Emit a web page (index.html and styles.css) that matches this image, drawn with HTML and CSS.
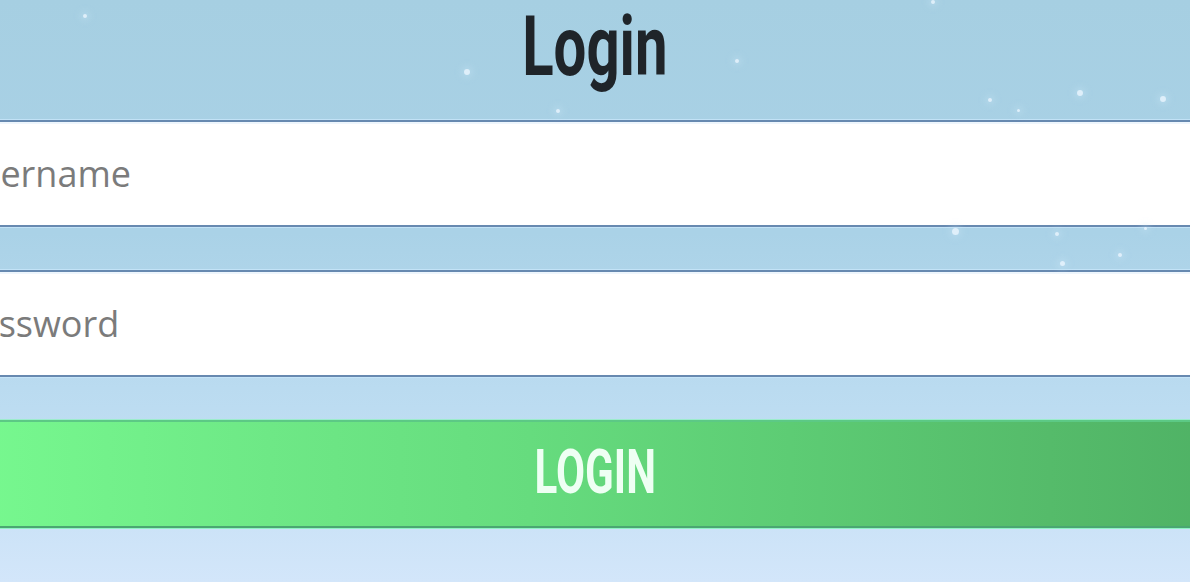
FILE: index.html
```html
<!DOCTYPE html>
<html lang="en">
<head>
    <meta charset="UTF-8">
    <meta name="viewport" content="width=device-width, initial-scale=1.0">
    <title>Login</title>
    <link rel="stylesheet" href="styles.css">
</head>
<body>
    <div id="snow" class="snow"></div>

    <main class="login">
        <h1 class="title">Login</h1>

        <form class="login-form" onsubmit="return false;">
            <input class="field" type="text" placeholder="Username">
            <input class="field" type="password" placeholder="Password">
            <button class="login-btn" type="submit"><span>LOGIN</span></button>
        </form>
    </main>

    <script>
        const flakes = [
            [85, 16, 4], [467, 72, 6], [558, 111, 4], [737, 61, 4],
            [933, 2, 4], [990, 100, 4], [1018, 110, 3], [1080, 93, 6],
            [1163, 99, 6], [955, 231, 7], [1057, 234, 4], [1062, 263, 5],
            [1120, 255, 4], [1145, 228, 3]
        ];

        const snow = document.getElementById('snow');
        flakes.forEach(([x, y, size]) => {
            const flake = document.createElement('div');
            flake.className = 'flake';
            flake.style.left = (x - size / 2) + 'px';
            flake.style.top = (y - size / 2) + 'px';
            flake.style.width = size + 'px';
            flake.style.height = size + 'px';
            snow.appendChild(flake);
        });
    </script>
</body>
</html>
```

FILE: styles.css
```css
body {
    margin: 0;
    padding: 0;
    height: 100vh;
    overflow: hidden;
    display: flex;
    justify-content: center;
    background: linear-gradient(180deg, #a6cfe2 0%, #aad2e7 40%, #bcdcf1 70%, #d3e6fa 100%);
    font-family: 'Open Sans', 'Noto Sans', sans-serif;
}

.snow {
    position: fixed;
    top: 0;
    left: 0;
    width: 100%;
    height: 100%;
    pointer-events: none;
    z-index: 5;
}

.flake {
    position: absolute;
    border-radius: 50%;
    background: rgba(236, 246, 255, 0.8);
    box-shadow: 0 0 6px 3px rgba(200, 228, 245, 0.35);
}

.login {
    width: 1300px;
    flex-shrink: 0;
    display: flex;
    flex-direction: column;
}

.title {
    align-self: center;
    margin: 0 0 28px;
    height: 92px;
    line-height: 94px;
    font-family: 'Roboto', sans-serif;
    font-size: 83px;
    font-weight: 700;
    color: #1f2429;
    transform: scaleX(0.7);
}

.login-form {
    display: flex;
    flex-direction: column;
    gap: 43px;
}

.field {
    box-sizing: border-box;
    height: 107px;
    margin: 0;
    padding: 0 10px;
    border: 2px solid #6789b0;
    background: #fff;
    box-shadow: 0 0 0 1px rgba(200, 230, 250, 0.8), inset 0 2px 0 #eef6fd;
    font-family: 'Open Sans', 'Noto Sans', sans-serif;
    font-size: 36px;
    color: #333;
    outline: none;
}

.field::placeholder {
    color: #7b7b7b;
}

.login-btn {
    box-sizing: border-box;
    height: 108px;
    margin: 0;
    padding: 0 0 6px;
    border: none;
    border-top: 2px solid #5cc985;
    border-bottom: 2px solid #4aa772;
    box-shadow: 0 1px 0 #8ff2c4, 0 -1px 0 #9ceccc;
    background: linear-gradient(90deg, #78fa90 0%, #6ee886 25%, #66dc7e 45%, #5dcc74 65%, #55bb6a 85%, #4eb064 100%);
    font-family: 'Roboto', sans-serif;
    font-size: 62px;
    font-weight: 700;
    color: #eefff3;
    cursor: pointer;
}

.login-btn span {
    display: inline-block;
    transform: scaleX(0.68);
}
```
